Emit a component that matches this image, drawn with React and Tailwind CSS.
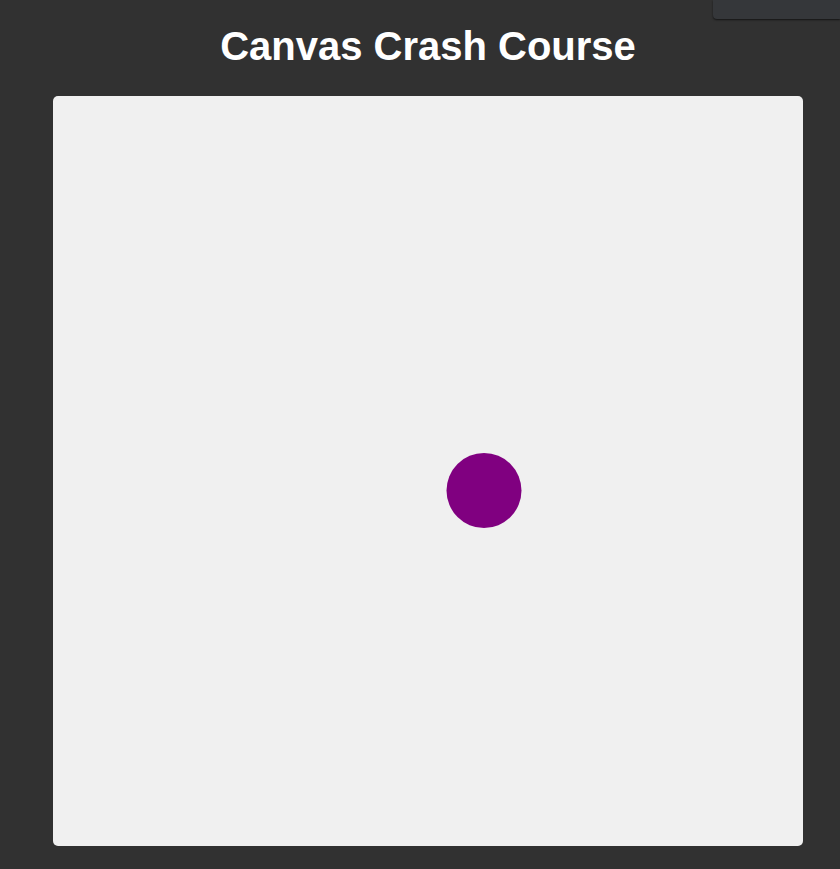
export default function App() {
    return (
        <div className="relative min-h-[869px] w-full bg-[#313131] font-['Liberation_Sans',Arial,sans-serif]">
            {/* corner panel */}
            <div className="absolute right-0 top-0 h-[19px] w-[127px] rounded-bl-[4px] bg-[#35373a] shadow-[0_1px_2px_rgba(0,0,0,0.6)]" />

            <div className="pl-[53px] pt-[23px]">
                <h1 className="w-[750px] text-center text-[40px] font-bold leading-[46px] text-white">
                    Canvas Crash Course
                </h1>
                <div className="mt-[27px] h-[750px] w-[750px] overflow-hidden rounded-[5px] bg-[#f0f0f0]">
                    <svg width="750" height="750" viewBox="0 0 750 750">
                        <circle cx="431" cy="394.5" r="37.5" fill="#800080" />
                    </svg>
                </div>
            </div>
        </div>
    );
}
